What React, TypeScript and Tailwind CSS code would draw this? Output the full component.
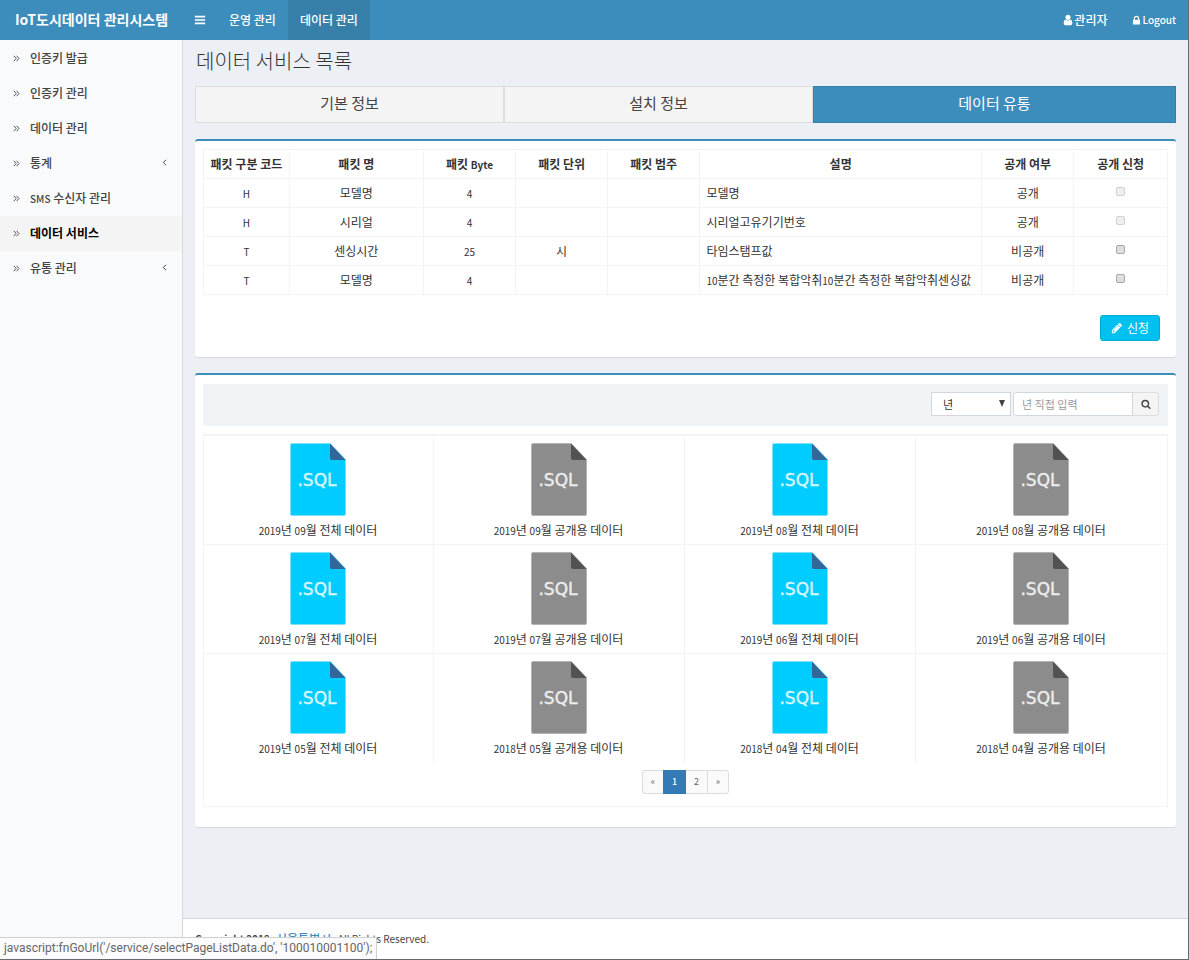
import React from 'react';

const ICONS = {
  bars: 'M1664 1344v128q0 26-19 45t-45 19h-1408q-26 0-45-19t-19-45v-128q0-26 19-45t45-19h1408q26 0 45 19t19 45zm0-512v128q0 26-19 45t-45 19h-1408q-26 0-45-19t-19-45v-128q0-26 19-45t45-19h1408q26 0 45 19t19 45zm0-512v128q0 26-19 45t-45 19h-1408q-26 0-45-19t-19-45v-128q0-26 19-45t45-19h1408q26 0 45 19t19 45z',
  user: 'M1536 1399q0 109-62.5 187t-150.5 78h-854q-88 0-150.5-78t-62.5-187q0-85 8.5-160.5t31.5-152 58.5-131 94-89 134.5-34.5q131 128 313 128t313-128q76 0 134.5 34.5t94 89 58.5 131 31.5 152 8.5 160.5zm-256-887q0 159-112.5 271.5t-271.5 112.5-271.5-112.5-112.5-271.5 112.5-271.5 271.5-112.5 271.5 112.5 112.5 271.5z',
  lock: 'M640 768h512v-192q0-106-75-181t-181-75-181 75-75 181v192zm832 96v576q0 40-28 68t-68 28h-960q-40 0-68-28t-28-68v-576q0-40 28-68t68-28h32v-192q0-184 132-316t316-132 316 132 132 316v192h32q40 0 68 28t28 68z',
  search: 'M1216 832q0-185-131.5-316.5t-316.5-131.5-316.5 131.5-131.5 316.5 131.5 316.5 316.5 131.5 316.5-131.5 131.5-316.5zm512 832q0 52-38 90t-90 38q-54 0-90-38l-343-342q-179 124-399 124-143 0-273.5-55.5t-225-150-150-225-55.5-273.5 55.5-273.5 150-225 225-150 273.5-55.5 273.5 55.5 225 150 150 225 55.5 273.5q0 220-124 399l343 343q37 37 37 90z',
  pencil: 'M491 1536l91-91-235-235-91 91v107h128v128h107zm523-928q0-22-22-22-10 0-17 7l-542 542q-7 7-7 17 0 22 22 22 10 0 17-7l542-542q7-7 7-17zm-54-192l416 416-832 832h-416v-416zm683 96q0 53-37 90l-166 166-416-416 166-165q36-38 90-38 53 0 91 38l235 234q37 39 37 91z',
};

function Icon({ name, className }: { name: keyof typeof ICONS; className: string }) {
  return (
    <svg viewBox="0 0 1792 1792" fill="currentColor" aria-hidden="true" className={className}>
      <path d={ICONS[name]} />
    </svg>
  );
}

/* Latin letters and digits are set smaller than the Hangul around them. */
function Mixed({ text }: { text: string }) {
  return (
    <>
      {text.split(/([A-Za-z0-9]+)/).map((part, i) =>
        i % 2 ? <span key={i} className="text-[10px]">{part}</span> : part,
      )}
    </>
  );
}

const MENU = [
  { label: '인증키 발급' },
  { label: '인증키 관리' },
  { label: '데이터 관리' },
  { label: '통계', sub: true },
  { label: 'SMS 수신자 관리' },
  { label: '데이터 서비스', active: true },
  { label: '유통 관리', sub: true },
];

function DoubleAngle() {
  return (
    <svg viewBox="0 0 7 7" fill="none" stroke="currentColor" aria-hidden="true" className="mt-0.5 size-[7px] text-[#555]">
      <path d="M.8 .8 3.2 3.5 .8 6.2M3.6 .8 6 3.5 3.6 6.2" />
    </svg>
  );
}

const COLUMNS = [
  { label: '패킷 구분 코드', width: 'w-[8.9%]' },
  { label: '패킷 명', width: 'w-[13.9%]' },
  { label: '패킷 Byte', width: 'w-[9.6%]' },
  { label: '패킷 단위', width: 'w-[9.5%]' },
  { label: '패킷 범주', width: 'w-[9.6%]' },
  { label: '설명', width: 'w-[29.2%]' },
  { label: '공개 여부', width: 'w-[9.6%]' },
  { label: '공개 신청', width: 'w-[9.7%]' },
];

const ROWS = [
  { code: 'H', name: '모델명', bytes: '4', unit: '', desc: '모델명', open: true },
  { code: 'H', name: '시리얼', bytes: '4', unit: '', desc: '시리얼고유기기번호', open: true },
  { code: 'T', name: '센싱시간', bytes: '25', unit: '시', desc: '타임스탬프값', open: false },
  { code: 'T', name: '모델명', bytes: '4', unit: '', desc: '10분간 측정한 복합악취10분간 측정한 복합악취센싱값', open: false },
];

const FILES = [
  ['2019년 09월 전체 데이터', '2019년 09월 공개용 데이터', '2019년 08월 전체 데이터', '2019년 08월 공개용 데이터'],
  ['2019년 07월 전체 데이터', '2019년 07월 공개용 데이터', '2019년 06월 전체 데이터', '2019년 06월 공개용 데이터'],
  ['2019년 05월 전체 데이터', '2018년 05월 공개용 데이터', '2018년 04월 전체 데이터', '2018년 04월 공개용 데이터'],
];

function FileIcon({ full }: { full: boolean }) {
  return (
    <svg viewBox="0 0 56 73" aria-hidden="true" className="h-[73px] w-[56px]">
      <path d="M2 .5H40L55.5 16.5V71q0 1.5-1.5 1.5H2Q.5 72.5 .5 71V2Q.5 .5 2 .5Z" fill={full ? '#00ccff' : '#8c8c8c'} stroke={full ? '#7fe0f5' : '#b4b4b4'} strokeWidth="1" />
      <path d="M40 .5 55.5 17H42q-2 0-2-2Z" fill={full ? '#336699' : '#525252'} />
      <text x="27" y="43" textAnchor="middle" fontSize="17" fill={full ? '#d9f7ff' : '#ececec'} stroke={full ? '#d9f7ff' : '#ececec'} strokeWidth=".4" className="font-['DejaVu_Sans',sans-serif]">.SQL</text>
    </svg>
  );
}

const panel = 'rounded-[3px] border-t-2 border-[#3c8dbc] bg-white px-2 shadow-[0_1px_1px_rgba(0,0,0,0.1)]';

export default function App() {
  return (
    <div className="relative flex min-h-screen flex-col border-r border-b border-[#66696e] bg-[#ecf0f5] font-['Noto_Sans_CJK_KR',sans-serif] text-xs text-[#333]">
      <header className="flex h-10 bg-[#3c8dbc] text-white">
        <a href="#" className="flex w-[183px] items-center justify-center pb-0.5 text-sm font-bold">IoT도시데이터 관리시스템</a>
        <nav className="flex font-medium">
          <button aria-label="메뉴 접기" className="flex w-[34px] items-center justify-center">
            <Icon name="bars" className="size-3" />
          </button>
          <a href="#" className="flex items-center px-3">운영 관리</a>
          <a href="#" className="flex items-center bg-[#367fa9] px-3">데이터 관리</a>
        </nav>
        <div className="ml-auto flex font-medium">
          <a href="#" className="flex items-center px-3"><Icon name="user" className="size-3" />관리자</a>
          <a href="#" className="flex items-center px-3 text-[10px]"><Icon name="lock" className="size-[11px]" />Logout</a>
        </div>
      </header>

      <div className="flex grow">
        <aside className="w-[183px] shrink-0 border-r border-[#d2d6de] bg-[#f9fafc] pt-px">
          <ul>
            {MENU.map((item) => (
              <li key={item.label}>
                <a href="#" className={item.active ? 'flex h-[35px] items-center bg-[#f4f4f5] pr-[15px] pb-0.5 pl-[13px] font-bold text-black' : 'flex h-[35px] items-center pr-[15px] pb-0.5 pl-[13px] font-medium text-[#444]'}>
                  <DoubleAngle />
                  <span className="ml-2.5"><Mixed text={item.label} /></span>
                  {item.sub && (
                    <svg viewBox="0 0 5 7" fill="none" stroke="currentColor" aria-hidden="true" className="ml-auto h-[7px] w-[5px]">
                      <path d="M4 .8 1.3 3.5 4 6.2" />
                    </svg>
                  )}
                </a>
              </li>
            ))}
          </ul>
        </aside>

        <div className="flex min-w-0 grow flex-col">
          <main className="grow px-3">
            <h1 className="flex h-[46px] items-center pb-1 pl-px text-xl font-light">데이터 서비스 목록</h1>
            <div className="flex h-[37px] text-[15px] text-[#444]">
              <button className="w-[31.5%] border border-[#ddd] bg-[#f4f4f4] pb-1">기본 정보</button>
              <button className="w-[31.5%] border border-[#ddd] bg-[#f4f4f4] pb-1">설치 정보</button>
              <button className="w-[37%] border border-[#367fa9] bg-[#3c8dbc] pb-1 text-white">데이터 유통</button>
            </div>

            <section className={`${panel} mt-4 pt-2 pb-4`}>
              <table className="w-full table-fixed border-collapse text-center">
                <thead>
                  <tr className="h-[29px]">
                    {COLUMNS.map((c) => (
                      <th key={c.label} scope="col" className={`${c.width} border border-[#f4f4f4] font-bold whitespace-nowrap`}><Mixed text={c.label} /></th>
                    ))}
                  </tr>
                </thead>
                <tbody>
                  {ROWS.map((r, i) => (
                    <tr key={i} className="h-[29px]">
                      <td className="border border-[#f4f4f4]"><Mixed text={r.code} /></td>
                      <td className="border border-[#f4f4f4]">{r.name}</td>
                      <td className="border border-[#f4f4f4]"><Mixed text={r.bytes} /></td>
                      <td className="border border-[#f4f4f4]">{r.unit}</td>
                      <td className="border border-[#f4f4f4]" />
                      <td className="border border-[#f4f4f4] pl-1.5 text-left whitespace-nowrap"><Mixed text={r.desc} /></td>
                      <td className="border border-[#f4f4f4]">{r.open ? '공개' : '비공개'}</td>
                      <td className="border border-[#f4f4f4]">
                        <input type="checkbox" disabled={r.open} aria-label={`${r.name} 공개 신청`} className="mx-auto mb-1 block size-[9px] appearance-none rounded-[2px] border border-[#a8a8a8] bg-[#dedede] disabled:border-[#d0d0d0] disabled:bg-[#efefef]" />
                      </td>
                    </tr>
                  ))}
                </tbody>
              </table>
              <div className="mt-5 flex justify-end pr-2">
                <button className="flex h-[26px] w-[60px] items-center justify-center gap-1 rounded-[3px] border border-[#00acd6] bg-[#00c0ef] text-white">
                  <Icon name="pencil" className="size-3" />신청
                </button>
              </div>
            </section>

            <section className={`${panel} mt-4 pt-[9px] pb-5`}>
              <form className="flex h-[42px] items-center justify-end bg-[#f0f4f7] pr-[9px] pb-0.5">
                <div className="relative mr-0.5">
                  <select aria-label="검색 기준" className="block h-6 w-20 appearance-none border border-[#d2d6de] bg-white pl-[11px] text-[11px] text-[#333]">
                    <option>년</option>
                    <option>월</option>
                  </select>
                  <svg viewBox="0 0 6 7" fill="#444" aria-hidden="true" className="pointer-events-none absolute top-2 right-1.5 h-[7px] w-1.5">
                    <path d="M0 0H6L3 7Z" />
                  </svg>
                </div>
                <input aria-label="년 직접 입력" placeholder="년 직접 입력" className="h-6 w-[120px] rounded-l-[3px] border border-[#d2d6de] bg-white px-2 text-[11px] placeholder:text-[#999]" />
                <button type="button" aria-label="검색" className="flex h-6 w-[26px] items-center justify-center rounded-r-[3px] border border-l-0 border-[#ddd] bg-[#f4f4f4] text-[#444]">
                  <Icon name="search" className="size-2.5" />
                </button>
              </form>

              <div className="mt-2 border border-t-2 border-[#f4f4f4]">
                <ul className="grid grid-cols-[230fr_251fr_231fr_251fr]">
                  {FILES.flatMap((row, r) =>
                    row.map((label, c) => (
                      <li key={label} className={`${r < 2 ? 'border-b' : ''} ${c < 3 ? 'border-r' : ''} h-[109px] border-[#f4f4f4] pt-[7px] pr-px`}>
                        <a href="#" className="flex flex-col items-center">
                          <FileIcon full={c % 2 === 0} />
                          <span className="mt-[5px] leading-[18px]"><Mixed text={label} /></span>
                        </a>
                      </li>
                    )),
                  )}
                </ul>
                <nav aria-label="페이지" className="mt-[7px] mb-3 flex justify-center text-[9px] text-[#666]">
                  <a href="#" aria-label="이전" className="flex h-6 w-[21px] items-center justify-center rounded-l-[3px] border border-r-0 border-[#ddd] bg-[#fafafa]">«</a>
                  <a href="#" aria-current="page" className="flex h-6 w-[23px] items-center justify-center bg-[#337ab7] font-medium text-white">1</a>
                  <a href="#" className="flex h-6 w-[21px] items-center justify-center border-y border-[#ddd] bg-[#fafafa]">2</a>
                  <a href="#" aria-label="다음" className="flex h-6 w-[22px] items-center justify-center rounded-r-[3px] border border-[#ddd] bg-[#fafafa]">»</a>
                </nav>
              </div>
            </section>
          </main>

          <footer className="flex h-[41px] items-center gap-[3px] border-t border-[#d2d6de] bg-white px-3 text-[10px] text-[#444]">
            <strong>Copyright 2018.</strong>
            <a href="#" className="text-xs font-medium text-[#3c8dbc]">서울특별시.</a>
            <span>All Rights Reserved.</span>
          </footer>
        </div>
      </div>

      <div className="absolute bottom-0 left-0 h-[22px] border-t border-r border-[#d0d0d0] bg-[#fbfbfc] px-1 font-['Roboto',sans-serif] text-xs leading-[21px] text-[#666]">
        javascript:fnGoUrl('/service/selectPageListData.do', '100010001100');
      </div>
    </div>
  );
}
